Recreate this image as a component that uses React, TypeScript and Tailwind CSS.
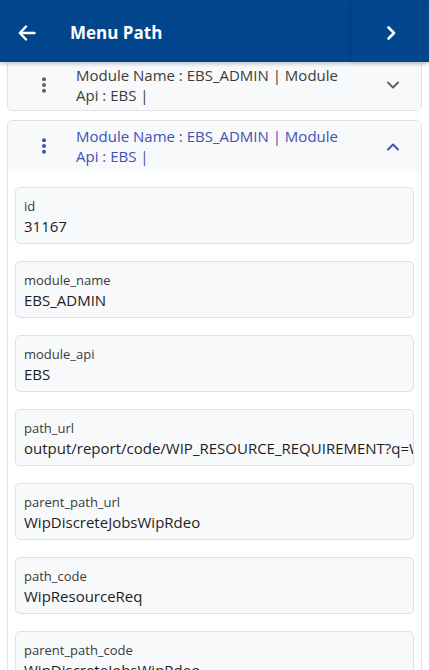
import React from "react";

const fields = [
  { label: "id", value: "31167" },
  { label: "module_name", value: "EBS_ADMIN" },
  { label: "module_api", value: "EBS" },
  { label: "path_url", value: "output/report/code/WIP_RESOURCE_REQUIREMENT?q=WipResourceReq" },
  { label: "parent_path_url", value: "WipDiscreteJobsWipRdeo" },
  { label: "path_code", value: "WipResourceReq" },
  { label: "parent_path_code", value: "WipDiscreteJobsWipRdeo" },
];

function Dots({ color }: { color: string }) {
  return (
    <svg width="6" height="16" viewBox="0 0 6 16" className={color}>
      <circle cx="3" cy="2.2" r="2" fill="currentColor" />
      <circle cx="3" cy="8" r="2" fill="currentColor" />
      <circle cx="3" cy="13.8" r="2" fill="currentColor" />
    </svg>
  );
}

function Chevron({ up, color }: { up?: boolean; color: string }) {
  return (
    <svg width="14" height="9" viewBox="0 0 14 9" className={color}>
      <path
        d={up ? "M2 7.5 L7 2.5 L12 7.5" : "M2 1.5 L7 6.5 L12 1.5"}
        fill="none"
        stroke="currentColor"
        strokeWidth="2"
        strokeLinecap="round"
        strokeLinejoin="round"
      />
    </svg>
  );
}

function AccordionHeader({ open }: { open?: boolean }) {
  const color = open ? "text-[#3f51b5]" : "text-[#5f6368]";
  return (
    <div className="flex items-center h-[50px] bg-[#f8f9fb]">
      <div className="w-[68px] flex justify-center pl-[3px]">
        <Dots color={color} />
      </div>
      <div className={`flex-1 text-[15px] leading-[20px] ${open ? "text-[#3f51b5]" : "text-[#3c3c3c]"}`}>
        Module Name : EBS_ADMIN | Module
        <br />
        Api : EBS |
      </div>
      <div className="w-[54px] flex justify-center pr-[3px]">
        <Chevron up={open} color={color} />
      </div>
    </div>
  );
}

export default function App() {
  return (
    <div className="h-[670px] overflow-hidden bg-white font-['Open_Sans',sans-serif]">
      <header className="relative z-10 h-[62px] pt-[3px] bg-[#01468c] flex items-center shadow-[0_2px_4px_rgba(0,0,0,0.22)]">
        <div className="w-[70px] flex pl-[18px]">
          <svg width="18" height="16" viewBox="0 0 18 16" className="text-white">
            <path d="M8 1.5 L1.8 8 L8 14.5 M2 8 H16.5" fill="none" stroke="currentColor" strokeWidth="2.4" strokeLinecap="round" strokeLinejoin="round" />
          </svg>
        </div>
        <div className="flex-1 text-white font-bold text-[17px]">Menu Path</div>
        <div className="w-[77px] h-full flex items-center justify-center shadow-[-2px_0_4px_rgba(0,0,0,0.1)]">
          <svg width="12" height="16" viewBox="0 0 12 16" className="text-white">
            <path d="M3.5 2.5 L9 8 L3.5 13.5" fill="none" stroke="currentColor" strokeWidth="2.6" strokeLinecap="round" strokeLinejoin="round" />
          </svg>
        </div>
      </header>
      <main className="-mt-[3px] px-[7px] flex flex-col gap-[9px]">
        <div className="border border-[#dee2e6] rounded-[5px] overflow-hidden">
          <AccordionHeader />
        </div>
        <div className="border border-[#dee2e6] rounded-[5px] overflow-hidden">
          <AccordionHeader open />
          <div className="bg-white px-[7px] pt-[16px] flex flex-col gap-[17px]">
            {fields.map((f) => (
              <div
                key={f.label}
                className="h-[57px] shrink-0 bg-[#f8f9fb] border border-[#dee2e6] rounded-[5px] pl-[8px] pt-[9px] overflow-hidden whitespace-nowrap"
              >
                <div className="text-[13px] leading-[18px] text-[#3a3a3a]">{f.label}</div>
                <div className="text-[15px] leading-[22px] text-[#1e1e1e]">{f.value}</div>
              </div>
            ))}
          </div>
        </div>
      </main>
    </div>
  );
}
